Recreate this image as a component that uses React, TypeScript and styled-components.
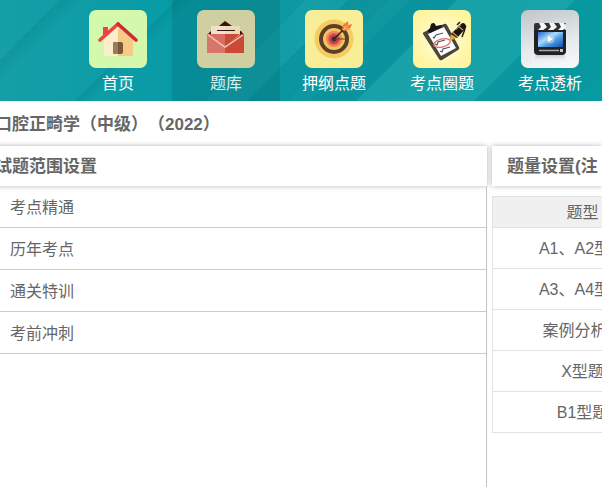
import React from "react";
import styled, { createGlobalStyle } from "styled-components";

const GlobalStyle = createGlobalStyle`
  *, *::before, *::after { box-sizing: border-box; }
  html, body { margin: 0; padding: 0; background: #fff; overflow: hidden; }
  body {
    font-family: "Liberation Sans", "Noto Sans CJK SC", sans-serif;
    font-size: 16px;
    color: #666;
    text-spacing-trim: space-all;
  }
`;

const Page = styled.div`
  display: flex;
  flex-direction: column;
  min-height: 100vh;
  overflow: hidden;
`;

const Header = styled.header`
  position: relative;
  flex: none;
  overflow: hidden;
  background: #0d9da6;
`;

const Stripes = styled.svg`
  position: absolute;
  inset: 0;
  width: 100%;
  height: 100%;
`;

const Nav = styled.nav`
  position: relative;
  display: flex;
  padding-left: 64px;
`;

const NavItem = styled.a<{ $active?: boolean }>`
  display: flex;
  flex: none;
  flex-direction: column;
  align-items: center;
  gap: 4px;
  width: 108px;
  padding: 10px 0 5px;
  color: ${(p) => (p.$active ? "#d9f0f0" : "#fff")};
  background: ${(p) => (p.$active ? "rgba(0, 70, 75, 0.18)" : "transparent")};
  line-height: 24px;
  text-decoration: none;
`;

const Tile = styled.span<{ $fill: string }>`
  display: block;
  width: 58px;
  height: 58px;
  border-radius: 7px;
  overflow: hidden;
  background: ${(p) => p.$fill};

  svg { display: block; }
`;

const Sheet = styled.main`
  display: flex;
  flex: 1;
  flex-direction: column;
  margin-left: -20px;
`;

const Title = styled.h1`
  margin: 0;
  padding: 2px 15px 0;
  font-size: 17px;
  line-height: 43px;
`;

const Columns = styled.div`
  display: grid;
  flex: 1;
  grid-template-columns: minmax(0, 1fr) 110px;
  gap: 5px;
`;

const Panel = styled.section`
  display: flex;
  flex-direction: column;
  min-width: 0;
`;

const PanelTitle = styled.h2`
  margin: 0;
  padding: 2px 15px 0;
  background: #fff;
  box-shadow: 0 0 5px rgba(0, 0, 0, 0.3);
  font-size: 17px;
  line-height: 38px;
  white-space: nowrap;
`;

const TopicList = styled.ul`
  flex: 1;
  margin: 0;
  padding: 0;
  border-right: 1px solid #c4c4c4;
  list-style: none;
`;

const Topic = styled.li`
  border-bottom: 1px solid #ccc;
`;

const TopicLink = styled.a`
  display: block;
  padding: 2px 30px 0;
  color: #666;
  line-height: 39px;
  text-decoration: none;
`;

const TableClip = styled.div`
  padding-top: 10px;
  overflow: hidden;
`;

const Table = styled.table`
  width: 181px;
  table-layout: fixed;
  border-collapse: collapse;
  border: 1px solid #e2e2e2;
`;

const HeadCell = styled.th`
  height: 31px;
  padding: 0 0 2px;
  border-bottom: 1px solid #e2e2e2;
  background: #f0f0f0;
  font-weight: normal;
`;

const Cell = styled.td`
  height: 41px;
  padding: 0 0 3px;
  border-bottom: 1px solid #e2e2e2;
  text-align: center;
`;

const Icon = ({ children }: { children: React.ReactNode }) => (
  <svg width="58" height="58" viewBox="0 0 58 58" aria-hidden="true">
    {children}
  </svg>
);

const HouseIcon = () => (
  <Icon>
    <path d="M14 17h5v8h-5z" fill="#e8454a" />
    <path d="M15 28 29 15v31H15z" fill="#fbefcb" />
    <path d="M29 15 44 28v18H29z" fill="#f7cb87" />
    <rect x="24" y="32" width="10" height="12" rx="2" fill="#7b5a3a" />
    <path d="M24 34a2 2 0 0 1 2-2h3v12h-3a2 2 0 0 1-2-2z" fill="#9a7b58" />
    <path d="M11 30 29 14" fill="none" stroke="#ee4247" strokeWidth="3.600" strokeLinecap="round" />
    <path d="M29 14 47 30" fill="none" stroke="#cb2c36" strokeWidth="3.600" strokeLinecap="round" />
  </Icon>
);

const EnvelopeIcon = () => (
  <Icon>
    <path d="M10 25 14 21h30l3 4z" fill="#38150d" />
    <path d="m22 16 6-5 7 5z" fill="#38150d" />
    <path d="M14 16h14v16H14z" fill="#f4dfcf" />
    <path d="M28 16h15v16H28z" fill="#e9dcb8" />
    <path d="M20 20.500h18" stroke="#2c1511" strokeWidth="1.200" />
    <path d="M10 24h3l15 12v7H10z" fill="#d77568" />
    <path d="M47 24h-3L28 36v7h19z" fill="#cc4938" />
    <path d="M13 24h15v13z" fill="#d86e62" />
    <path d="M28 24h15L28 37z" fill="#c94c3b" />
    <path d="m11 25 17 12 18-12" fill="none" stroke="#f2c7b5" strokeWidth="1.500" />
  </Icon>
);

const TargetIcon = () => (
  <Icon>
    <circle cx="29" cy="29" r="19.500" fill="#f6cc62" />
    <circle cx="29" cy="29" r="15" fill="#5b4028" />
    <circle cx="29" cy="29" r="11" fill="#f3c35d" />
    <circle cx="29" cy="29" r="8" fill="#f08257" />
    <circle cx="29" cy="29" r="5.500" fill="#c84450" />
    <circle cx="29" cy="29" r="2.500" fill="#4b2a2d" />
    <path d="M29 29h15" stroke="#664328" strokeWidth="1" />
    <path d="m29 29 11-11" stroke="#2b211d" strokeWidth="1.500" />
    <path d="m37 20 1-5 5-4 .500 4 4-1-3 5-5 2z" fill="#f37b3f" />
    <path d="m38 20 6-6m-4 2-.500 3 4-.500" fill="none" stroke="#ffc16f" strokeWidth=".8" />
  </Icon>
);

const ClipboardIcon = () => (
  <Icon>
    <path d="M11 22 31 14q2-1 3 1l12 22q1 2-1 3L29 50q-2 1-3-1L10 24q-1-1 1-2z" fill="#4a443b" />
    <path d="m15 24 16-7 12 21-15 8z" fill="#fff" />
    <path d="m14 21 3-3 1-4q3-2 4 0l1 2 5-1 1 2-12 6z" fill="#171717" />
    <path d="m20 27 1 1 2-3 7-2M22 34l2 1 1-3 7-2M27 41l2 1 1-3 7-2" fill="none" stroke="#555" strokeWidth="1.200" />
    <ellipse cx="29" cy="33" rx="8.500" ry="4" transform="rotate(-14 29 33)" fill="none" stroke="#e66c68" strokeWidth="1.300" />
    <path d="m36 31 2-7 6 4z" fill="#e5a33c" />
    <path d="m38 24 10-10q2-2 4 0t1 4L44 28z" fill="#171411" />
    <path d="m39 22 6 5m0-11 5 4" stroke="#c39350" strokeWidth="1.500" />
    <path d="m44 15 3-3m5 7-3 8" stroke="#1d1d1d" strokeWidth="1.500" />
    <path d="m43 20 5-5" stroke="#777" strokeWidth="1" />
  </Icon>
);

const ClapperIcon = () => (
  <Icon>
    <defs>
      <linearGradient id="screen" x1="0" y1="0" x2="1" y2="1">
        <stop offset="0" stopColor="#2468cc" />
        <stop offset=".4" stopColor="#a9dbfb" />
        <stop offset=".6" stopColor="#4f9fe6" />
        <stop offset="1" stopColor="#174bad" />
      </linearGradient>
      <linearGradient id="reflection" x1="0" y1="0" x2="0" y2="1">
        <stop offset="0" stopColor="#888" stopOpacity=".35" />
        <stop offset="1" stopColor="#fff" stopOpacity="0" />
      </linearGradient>
    </defs>
    <rect x="14" y="45" width="30" height="7" rx="2" fill="url(#reflection)" />
    <path d="M13 15q0-2 2-2h30l-3 4 3 4H13z" fill="#333" />
    <path d="M18 13h5l3 4-5 4h-5l4-4zM28 13h5l3 4-5 4h-5l4-4zM38 13h5l2 4-4 4h-5l4-4z" fill="#f7f7f7" />
    <path d="M13 20h32v21q0 4-4 4H17q-4 0-4-4z" fill="#202124" />
    <rect x="17" y="22" width="25" height="15" fill="url(#screen)" />
    <circle cx="29" cy="29" r="4.500" fill="#b9d5ec" opacity=".6" />
    <path d="m27 26 5 3-5 3z" fill="#fff" />
    <path d="M18 40.500h20" stroke="#aaa" strokeWidth="1.500" />
    <rect x="39" y="39" width="3" height="3" fill="#c7c7c7" />
  </Icon>
);

const navItems = [
  { label: "首页", fill: "#d4f9ad", icon: <HouseIcon /> },
  { label: "题库", fill: "#cfcfa2", icon: <EnvelopeIcon />, active: true },
  { label: "押纲点题", fill: "#f9ee98", icon: <TargetIcon /> },
  { label: "考点圈题", fill: "radial-gradient(circle, #fffde2, #fff5a0 75%)", icon: <ClipboardIcon /> },
  { label: "考点透析", fill: "linear-gradient(165deg, #bfc5ca, #e4e8ea 55%, #fafafa)", icon: <ClapperIcon /> },
];

const topics = ["考点精通", "历年考点", "通关特训", "考前冲刺"];
const questionTypes = ["A1、A2型题", "A3、A4型题", "案例分析题", "X型题", "B1型题"];

const HeaderStripes = () => (
  <Stripes viewBox="0 0 602 101" preserveAspectRatio="xMinYMin slice" aria-hidden="true">
    <defs>
      <linearGradient id="base" x1="0" y1="0" x2="1" y2="0">
        <stop offset="0" stopColor="#159fa7" />
        <stop offset=".3" stopColor="#079ba6" />
        <stop offset=".6" stopColor="#1097a0" />
        <stop offset="1" stopColor="#079ba3" />
      </linearGradient>
      <linearGradient id="fold" gradientUnits="userSpaceOnUse" x1="30" y1="30" x2="42" y2="42">
        <stop offset="0" stopColor="#046e78" stopOpacity=".22" />
        <stop offset="1" stopColor="#046e78" stopOpacity="0" />
      </linearGradient>
      <linearGradient id="foldWide" gradientUnits="userSpaceOnUse" x1="88" y1="88" x2="97" y2="97">
        <stop offset="0" stopColor="#046e78" stopOpacity=".22" />
        <stop offset="1" stopColor="#046e78" stopOpacity="0" />
      </linearGradient>
    </defs>
    <path d="M0 0h602v101H0z" fill="url(#base)" />
    <path d="M60 0h32L0 92V60z" fill="url(#fold)" />
    <path d="M176 0h20L95 101H75z" fill="url(#foldWide)" />
    <path d="M306 0h42L247 101h-42z" fill="#24adb2" opacity=".3" />
    <path d="M348 0h40L287 101h-40z" fill="#007d88" opacity=".15" />
    <path d="M410 0h47L356 101h-47z" fill="#008992" opacity=".25" />
    <path d="M457 0h118L474 101H356z" fill="#24abb0" opacity=".5" />
    <path d="M575 0h27v74l-27 27H474z" fill="#078f98" opacity=".25" />
  </Stripes>
);

export default function App() {
  return (
    <Page>
      <GlobalStyle />
      <Header>
        <HeaderStripes />
        <Nav>
          {navItems.map((item) => (
            <NavItem key={item.label} href="#" $active={item.active} aria-current={item.active ? "page" : undefined}>
              <Tile $fill={item.fill}>{item.icon}</Tile>
              {item.label}
            </NavItem>
          ))}
        </Nav>
      </Header>
      <Sheet>
        <Title>口腔正畸学（中级）（2022）</Title>
        <Columns>
          <Panel>
            <PanelTitle>试题范围设置</PanelTitle>
            <TopicList>
              {topics.map((topic) => (
                <Topic key={topic}>
                  <TopicLink href="#">{topic}</TopicLink>
                </Topic>
              ))}
            </TopicList>
          </Panel>
          <Panel>
            <PanelTitle>题量设置(注</PanelTitle>
            <TableClip>
              <Table>
                <thead>
                  <tr>
                    <HeadCell scope="col">题型</HeadCell>
                  </tr>
                </thead>
                <tbody>
                  {questionTypes.map((type) => (
                    <tr key={type}>
                      <Cell>{type}</Cell>
                    </tr>
                  ))}
                </tbody>
              </Table>
            </TableClip>
          </Panel>
        </Columns>
      </Sheet>
    </Page>
  );
}
